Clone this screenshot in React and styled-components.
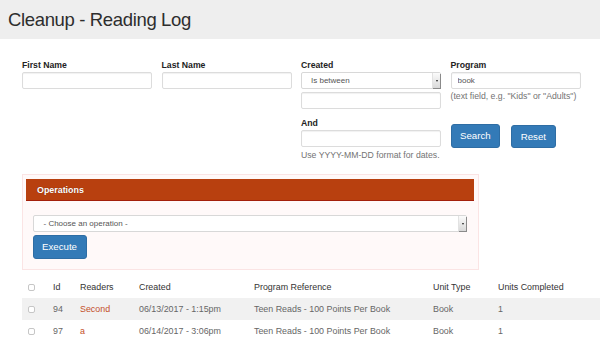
import styled, { createGlobalStyle } from "styled-components";

const GlobalStyle = createGlobalStyle`
  body {
    margin: 0;
    background: #fff;
    font-family: "Liberation Sans", Arial, sans-serif;
    overflow: hidden;
  }
`;

const Header = styled.header`
  height: 39px;
  background: #eeeeee;
  display: flex;
  align-items: center;
  padding-left: 8px;
`;

const Title = styled.h1`
  margin: 0;
  font-size: 18.5px;
  font-weight: 400;
  letter-spacing: -0.35px;
  color: #2d2d2d;
`;

const Main = styled.main`
  padding: 21px 0 0 22px;
`;

const FilterGrid = styled.div`
  display: grid;
  grid-template-columns: 130px 130px 140px 130px;
  column-gap: 9.5px;
  align-items: start;
`;

const Field = styled.div`
  display: flex;
  flex-direction: column;
`;

const Label = styled.label`
  font-size: 8.7px;
  font-weight: 700;
  line-height: 10px;
  color: #222;
  margin: ${(p) => p.$top || 0}px 0 2px;
`;

const TextInput = styled.input`
  box-sizing: border-box;
  width: 100%;
  height: 17px;
  margin: ${(p) => p.$top || 0}px 0 0;
  padding: 0 6px;
  border: 1px solid #dcdcdc;
  border-radius: 2px;
  box-shadow: inset 0 1px 1px rgba(0, 0, 0, 0.06);
  font-family: inherit;
  font-size: 8px;
  color: #555;
  outline: none;
`;

const SelectBox = styled.div`
  box-sizing: border-box;
  display: flex;
  align-items: center;
  height: 17px;
  padding-left: ${(p) => p.$indent}px;
  border: 1px solid #d8d8d8;
  border-radius: 2px;
  background: #fff;
  font-size: 8px;
  color: #555;
`;

const SelectArrow = styled.span`
  margin-left: auto;
  align-self: stretch;
  width: 7px;
  background: linear-gradient(#fbfbfb, #d9d9d9);
  border-left: 1px solid #e2e2e2;
  box-shadow: 1px 1px 0 #8a8a8a;
  display: flex;
  align-items: center;
  justify-content: center;

  &::after {
    content: "";
    border-left: 1.5px solid transparent;
    border-right: 1.5px solid transparent;
    border-top: 2px solid #222;
  }
`;

const Hint = styled.div`
  font-size: 8.7px;
  line-height: 11px;
  color: #737373;
  margin-top: ${(p) => p.$top || 0}px;
  white-space: nowrap;
`;

const ButtonRow = styled.div`
  display: flex;
  align-items: flex-start;
  gap: 11px;
  margin-top: 22px;
`;

const Button = styled.button`
  box-sizing: border-box;
  height: ${(p) => p.$h || 24}px;
  margin-top: ${(p) => p.$top || 0}px;
  padding: 0 8.5px;
  background: #337ab7;
  border: 1px solid #2e6da4;
  border-radius: 3px;
  color: #fff;
  font-family: inherit;
  font-size: 9.7px;
  line-height: 1;
  cursor: pointer;
`;

const OpsPanel = styled.section`
  box-sizing: border-box;
  width: 457px;
  margin: 13px 0 0 -0.5px;
  padding: 4px 3.5px 10px;
  border: 1px solid #fbe4e4;
  background: #fff9f9;
`;

const OpsBar = styled.div`
  box-sizing: border-box;
  height: 22px;
  display: flex;
  align-items: center;
  padding-left: 11px;
  background: #b8400f;
  border-bottom: 1px solid #a3200b;
  color: #fff;
  font-size: 8.9px;
  font-weight: 700;
  text-shadow: 0 0 1px rgba(0, 0, 0, 0.4);
`;

const OpsBody = styled.div`
  padding: 14px 7px 0 6.5px;
  display: flex;
  flex-direction: column;
  align-items: flex-start;

  & > ${SelectBox} {
    align-self: stretch;
  }
`;

const Table = styled.table`
  width: 100%;
  margin-top: 6px;
  border-collapse: collapse;
  table-layout: fixed;
  font-size: 8.9px;
`;

const Col = styled.col`
  width: ${(p) => (p.$w ? `${p.$w}px` : "auto")};
`;

const HeadCell = styled.th`
  height: 22px;
  padding: 0 5px;
  text-align: left;
  font-weight: 400;
  color: #333;
  white-space: nowrap;
`;

const Row = styled.tr`
  background: ${(p) => (p.$striped ? "#f1f1f1" : "transparent")};
`;

const Cell = styled.td`
  height: 22px;
  padding: 0 5px;
  color: #666;
  white-space: nowrap;
`;

const CheckCell = styled.td`
  height: 22px;
  padding: 0 0 0 6px;
`;

const CheckHead = styled.th`
  height: 22px;
  padding: 0 0 0 6px;
  text-align: left;
`;

const Check = styled.span`
  display: inline-block;
  width: 7px;
  height: 7px;
  box-sizing: border-box;
  border: 1px solid #c6c6c6;
  border-radius: 2px;
  background: #fff;
  vertical-align: middle;
`;

const ReaderLink = styled.a`
  color: #c4502a;
  text-decoration: none;
`;

const rows = [
  { id: 94, reader: "Second", created: "06/13/2017 - 1:15pm" },
  { id: 97, reader: "a", created: "06/14/2017 - 3:06pm" },
];

export default function App() {
  return (
    <>
      <GlobalStyle />
      <Header>
        <Title>Cleanup - Reading Log</Title>
      </Header>
      <Main>
        <FilterGrid>
          <Field>
            <Label>First Name</Label>
            <TextInput />
          </Field>
          <Field>
            <Label>Last Name</Label>
            <TextInput />
          </Field>
          <Field>
            <Label>Created</Label>
            <SelectBox $indent={9}>
              Is between
              <SelectArrow />
            </SelectBox>
            <TextInput $top={3} />
            <Label $top={9}>And</Label>
            <TextInput />
            <Hint $top={3}>Use YYYY-MM-DD format for dates.</Hint>
          </Field>
          <Field>
            <Label>Program</Label>
            <TextInput defaultValue="book" />
            <Hint $top={2}>(text field, e.g. "Kids" or "Adults")</Hint>
            <ButtonRow>
              <Button $h={24}>Search</Button>
              <Button $h={23} $top={1}>
                Reset
              </Button>
            </ButtonRow>
          </Field>
        </FilterGrid>

        <OpsPanel>
          <OpsBar>Operations</OpsBar>
          <OpsBody>
            <SelectBox $indent={10}>
              - Choose an operation -
              <SelectArrow />
            </SelectBox>
            <Button $h={24} $top={3}>
              Execute
            </Button>
          </OpsBody>
        </OpsPanel>

        <Table>
          <colgroup>
            <Col $w={26} />
            <Col $w={27} />
            <Col $w={59} />
            <Col $w={115} />
            <Col $w={179} />
            <Col $w={65} />
            <Col />
          </colgroup>
          <thead>
            <tr>
              <CheckHead>
                <Check />
              </CheckHead>
              <HeadCell>Id</HeadCell>
              <HeadCell>Readers</HeadCell>
              <HeadCell>Created</HeadCell>
              <HeadCell>Program Reference</HeadCell>
              <HeadCell>Unit Type</HeadCell>
              <HeadCell>Units Completed</HeadCell>
            </tr>
          </thead>
          <tbody>
            {rows.map((r, i) => (
              <Row key={r.id} $striped={i % 2 === 0}>
                <CheckCell>
                  <Check />
                </CheckCell>
                <Cell>{r.id}</Cell>
                <Cell>
                  <ReaderLink href="#">{r.reader}</ReaderLink>
                </Cell>
                <Cell>{r.created}</Cell>
                <Cell>Teen Reads - 100 Points Per Book</Cell>
                <Cell>Book</Cell>
                <Cell>1</Cell>
              </Row>
            ))}
          </tbody>
        </Table>
      </Main>
    </>
  );
}
